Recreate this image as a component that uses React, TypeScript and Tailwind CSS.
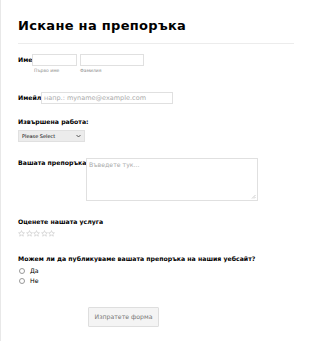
import React from 'react';

const Star = () => (
  <svg width="7" height="7" viewBox="0 0 24 24" className="shrink-0">
    <path d="M12 2l2.9 6.9 7.1.6-5.4 4.7 1.7 7L12 17.5 5.7 21.2l1.7-7L2 9.5l7.1-.6z" fill="none" stroke="#b8b8b8" strokeWidth="1.6" strokeLinejoin="round" />
  </svg>
);

export default function App() {
  return (
    <div className="w-[310px] h-[341px] bg-white border-l border-[#e8e8e8] overflow-hidden font-['DejaVu_Sans',sans-serif] text-black">
      <div className="px-[17px]">
        {/* Header */}
        <h1 className="pt-[17px] text-[13px] leading-[18px] font-bold tracking-[0.3px]">Искане на препоръка</h1>
        <div className="mt-[8px] h-px w-[276px] bg-[#ececec]"></div>

        {/* Име */}
        <div className="mt-[10px] flex items-start">
          <span className="text-[6.2px] font-bold leading-[8px] mt-[2px] w-[14px] whitespace-nowrap">Име</span>
          <div className="flex gap-[3px]">
            <div className="flex flex-col">
              <div className="w-[45px] h-[12px] border border-[#e0e0e0]"></div>
              <span className="text-[4.5px] text-[#888] mt-[2px] ml-[2px] leading-[6px]">Първо име</span>
            </div>
            <div className="flex flex-col">
              <div className="w-[64px] h-[12px] border border-[#e0e0e0]"></div>
              <span className="text-[4.5px] text-[#888] mt-[2px] leading-[6px]">Фамилия</span>
            </div>
          </div>
        </div>

        {/* Имейл */}
        <div className="mt-[18px] flex items-start">
          <span className="text-[6.2px] font-bold leading-[8px] mt-[2px] w-[23px] whitespace-nowrap overflow-visible">Имейл</span>
          <div className="w-[132px] h-[12px] border border-[#e0e0e0] flex items-center px-[2px] text-[6.5px] text-[#aaa] leading-none">напр.: myname@example.com</div>
        </div>

        {/* Извършена работа */}
        <div className="mt-[14px] text-[6.2px] font-bold leading-[8px]">Извършена работа:</div>
        <div className="mt-[4px] w-[67px] h-[12px] bg-[#ececec] border border-[#e0e0e0] flex items-center justify-between px-[3px] text-[5px] leading-none">
          <span>Please Select</span>
          <svg width="5" height="4" viewBox="0 0 10 6"><path d="M1 1l4 4 4-4" fill="none" stroke="#333" strokeWidth="1.6" /></svg>
        </div>

        {/* Вашата препоръка */}
        <div className="mt-[16px] flex items-start">
          <span className="text-[6.2px] font-bold leading-[8px] mt-[1px] w-[68px] whitespace-nowrap">Вашата препоръка</span>
          <div className="relative w-[172px] h-[43px] border border-[#e0e0e0] px-[2px] pt-[1px] text-[6.2px] text-[#aaa] leading-[9px]">
            Въведете тук...
            <svg width="5" height="5" viewBox="0 0 10 10" className="absolute right-[1px] bottom-[1px]"><path d="M9 2L2 9M9 6L6 9" stroke="#999" strokeWidth="1" /></svg>
          </div>
        </div>

        {/* Оценете */}
        <div className="mt-[17px] text-[6.2px] font-bold leading-[8px]">Оценете нашата услуга</div>
        <div className="mt-[4px] flex gap-[0.5px]">
          <Star /><Star /><Star /><Star /><Star />
        </div>

        {/* Radio */}
        <div className="mt-[18px] text-[6.2px] font-bold leading-[8px] whitespace-nowrap">Можем ли да публикуваме вашата препоръка на нашия уебсайт?</div>
        <div className="mt-[3px] flex flex-col gap-[1px] text-[6.2px] leading-[9px]">
          <div className="flex items-center gap-[5px] pl-[1px]">
            <span className="w-[6px] h-[6px] rounded-full border border-[#999]"></span>
            <span>Да</span>
          </div>
          <div className="flex items-center gap-[5px] pl-[1px]">
            <span className="w-[6px] h-[6px] rounded-full border border-[#999]"></span>
            <span>Не</span>
          </div>
        </div>

        {/* Submit */}
        <div className="mt-[22px] ml-[70px] w-[71px] h-[20px] bg-[#f4f4f4] border border-[#dedede] rounded-[1px] flex items-center justify-center text-[6.2px] text-[#777]">
          Изпратете форма
        </div>
      </div>
    </div>
  );
}
